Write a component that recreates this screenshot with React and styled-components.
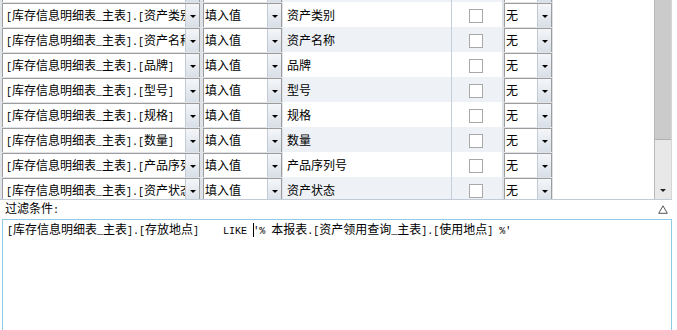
import styled, { createGlobalStyle } from "styled-components";

const GlobalStyle = createGlobalStyle`
  html, body {
    margin: 0;
    padding: 0;
    background: #ffffff;
  }
  body {
    font-family: "Noto Sans CJK SC", "Liberation Sans", sans-serif;
    font-size: 12px;
    color: #000;
  }
`;

//STYLED COMPONENTS
//=======================================
const Page = styled.div`
  width: 677px;
  height: 330px;
  overflow: hidden;
  display: flex;
  flex-direction: column;
  background: #ffffff;
`;

const GridFrame = styled.div`
  height: 199px;
  display: flex;
  border-bottom: 1px solid #c3ccd6;
  margin-right: 5px;
`;

const Viewport = styled.div`
  flex: 1;
  overflow: hidden;
`;

const Rows = styled.div`
  display: flex;
  flex-direction: column;
  margin-top: -23px;
`;

const Row = styled.div`
  display: grid;
  grid-template-columns: 201px 82px 169px 50px 51px 1fr;
  height: 25px;
  background: ${(p) => (p.$alt ? "#eef2f7" : "#ffffff")};
`;

const ComboCell = styled.div`
  padding: 1px 1px 1px 2px;
  background: #dfe3e8;
  display: flex;
`;

const Combo = styled.div`
  flex: 1;
  display: flex;
  border: 1px solid #9c9c9c;
  background: #ffffff;
  min-width: 0;
`;

const ComboText = styled.div`
  flex: 1;
  min-width: 0;
  overflow: hidden;
  white-space: nowrap;
  padding-left: ${(p) => p.$pad || "2px"};
  line-height: 21px;
`;

const ComboButton = styled.div`
  width: 13px;
  flex-shrink: 0;
  display: flex;
  align-items: center;
  justify-content: center;
  border-left: 1px solid #c2cad3;
  background: linear-gradient(#f4f6f9, #d7dee6);
  &::after {
    content: "";
    border-left: 3px solid transparent;
    border-right: 3px solid transparent;
    border-top: 3px solid #000;
  }
`;

const TextCell = styled.div`
  padding-left: 4px;
  line-height: 25px;
  white-space: nowrap;
  overflow: hidden;
  border-right: 1px solid #c5cfda;
`;

const CheckCell = styled.div`
  display: flex;
  align-items: center;
  justify-content: center;
  padding-right: 3px;
`;

const CheckBox = styled.div`
  width: 12px;
  height: 12px;
  border: 1px solid #a8a8a8;
  background: #ffffff;
`;

const EmptyCell = styled.div`
  background: #ffffff;
`;

const ScrollBar = styled.div`
  width: 18px;
  display: flex;
  flex-direction: column;
  background: #e8e8e8;
  border-left: 1px solid #b9b9b9;
  border-right: 1px solid #d6d6d6;
  box-sizing: border-box;
`;

const Thumb = styled.div`
  height: 139px;
  background: #cbcbcb;
  border-bottom: 1px solid #b0b0b0;
`;

const Track = styled.div`
  flex: 1;
`;

const ArrowButton = styled.div`
  height: 17px;
  display: flex;
  align-items: center;
  justify-content: center;
  &::after {
    content: "";
    border-left: 3px solid transparent;
    border-right: 3px solid transparent;
    border-top: 3px solid #222;
  }
`;

const FilterHeader = styled.div`
  height: 19px;
  display: flex;
  align-items: center;
  justify-content: space-between;
  padding: 0 9px 0 5px;
`;

const Label = styled.span`
  line-height: 17px;
  margin-top: -2px;
`;

const FilterBox = styled.div`
  flex: 1;
  margin: 0 5px 0 2px;
  border: 1px solid #8fcbe4;
  border-bottom: none;
  padding: 0 4px;
  line-height: 17px;
  white-space: nowrap;
`;

const Half = styled.span`
  font-family: "Liberation Mono", monospace;
  font-size: 10px;
  white-space: pre;
`;

const Keyword = styled(Half)`
  margin-left: 24px;
`;

const Caret = styled.span`
  display: inline-block;
  width: 1px;
  height: 14px;
  background: #000;
  vertical-align: -3px;
  margin-right: -1px;
`;
//=======================================

// SimSun style: ascii runs are half width (6px), cjk full width
const Mixed = ({ text }) =>
  text.split(/([\x20-\x7e]+)/).map((part, i) =>
    /^[\x20-\x7e]+$/.test(part) ? <Half key={i}>{part}</Half> : part
  );

const rows = [
  "资产编号",
  "资产类别",
  "资产名称",
  "品牌",
  "型号",
  "规格",
  "数量",
  "产品序列号",
  "资产状态",
];

const Collapse = () => (
  <svg width="10" height="9" viewBox="0 0 10 9">
    <path d="M5 0.8 L9.3 8.3 L0.7 8.3 Z" fill="none" stroke="#555" strokeWidth="1" />
  </svg>
);

const App = () => {
  return (
    <Page>
      <GlobalStyle />
      <GridFrame>
        <Viewport>
          <Rows>
            {rows.map((name, i) => (
              <Row key={name} $alt={i % 2 === 0}>
                <ComboCell>
                  <Combo>
                    <ComboText $pad="3px">
                      <Mixed text={`[库存信息明细表_主表].[${name}]`} />
                    </ComboText>
                    <ComboButton />
                  </Combo>
                </ComboCell>
                <ComboCell>
                  <Combo>
                    <ComboText $pad="1px">填入值</ComboText>
                    <ComboButton />
                  </Combo>
                </ComboCell>
                <TextCell>{name}</TextCell>
                <CheckCell>
                  <CheckBox />
                </CheckCell>
                <ComboCell>
                  <Combo>
                    <ComboText $pad="1px">无</ComboText>
                    <ComboButton />
                  </Combo>
                </ComboCell>
                <EmptyCell />
              </Row>
            ))}
          </Rows>
        </Viewport>
        <ScrollBar>
          <Thumb />
          <Track />
          <ArrowButton />
        </ScrollBar>
      </GridFrame>
      <FilterHeader>
        <Label>
          <Mixed text="过滤条件:" />
        </Label>
        <Collapse />
      </FilterHeader>
      <FilterBox>
        <Mixed text="[库存信息明细表_主表].[存放地点]" />
        <Keyword>LIKE </Keyword>
        <Caret />
        <Mixed text="'% 本报表.[资产领用查询_主表].[使用地点] %'" />
      </FilterBox>
    </Page>
  );
};

export default App;
